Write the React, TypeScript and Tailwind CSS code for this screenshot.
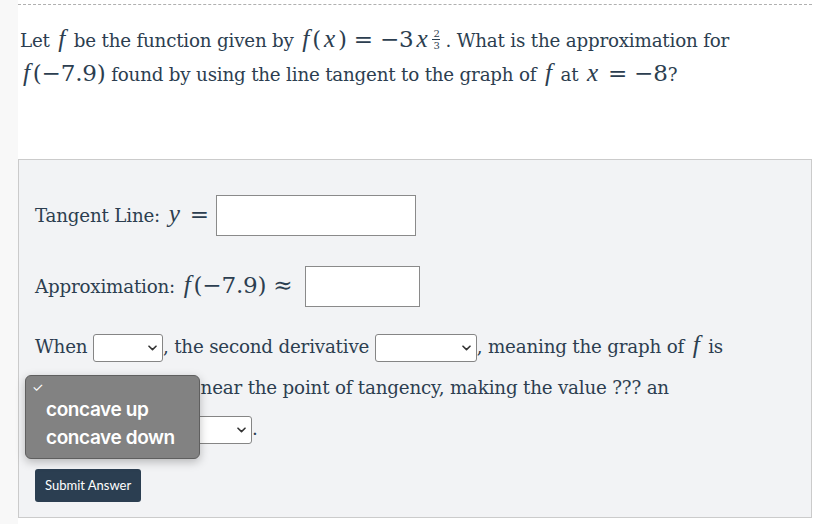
import React from 'react';

const serif = { fontFamily: '"DejaVu Serif", Georgia, serif' };
const mathFont = { fontFamily: '"DejaVu Serif", serif' };
const italicFont = { fontFamily: '"Liberation Serif", "Times New Roman", serif' };

// italic math letter
const V = ({ children }: { children: React.ReactNode }) => (
  <span className="italic text-[1.38em] leading-none pl-[3px] pr-[3px]" style={italicFont}>{children}</span>
);
// upright math run
const U = ({ children }: { children: React.ReactNode }) => (
  <span className="text-[1.26em] leading-none" style={mathFont}>{children}</span>
);
// relation / operator with spacing
const Op = ({ children }: { children: React.ReactNode }) => (
  <span className="text-[1.26em] leading-none mx-[7px]" style={mathFont}>{children}</span>
);

const Chevron = () => (
  <svg width="9" height="6" viewBox="0 0 9 6" className="absolute right-[5px] top-1/2 -translate-y-1/2">
    <path d="M1 1.2 L4.5 4.6 L8 1.2" fill="none" stroke="#333" strokeWidth="1.6" strokeLinecap="round" strokeLinejoin="round" />
  </svg>
);

const Select = ({ w }: { w: string }) => (
  <span className={`relative inline-block align-middle h-[28px] bg-white border border-[#858585] rounded-[3px] ${w}`}>
    <Chevron />
  </span>
);

export default function App() {
  return (
    <div className="w-[816px] h-[524px] bg-white flex overflow-hidden text-[#2c3e50]" style={serif}>
      <div className="w-[18px] bg-[#f8f8f8] shrink-0" />
      <div className="w-[794px] shrink-0 flex flex-col">
        <div className="mt-[4px] border-t border-dashed border-[#b0b0b0]" />
        <div className="pl-[2px] pt-[19px] text-[18.3px] leading-[34px] tracking-[-0.2px]">
          Let <V>f</V> be the function given by <V>f</V><U>(</U><V>x</V><U>)</U>
          <Op>=</Op>
          <U>−3</U><V>x</V>
          <span className="inline-flex flex-col items-center align-[10px] text-[10px] leading-[11px] ml-[2px] mr-[5px]" style={mathFont}>
            <span>2</span>
            <span className="border-t border-[#2c3e50] w-[8px]" />
            <span>3</span>
          </span>
          . What is the approximation for
          <br />
          <V>f</V><U>(−7.9)</U> found by using the line tangent to the graph of <V>f</V> at <V>x</V>
          <Op>=</Op>
          <U>−8</U>?
        </div>

        <div className="relative mt-[67px] h-[359px] bg-[#f2f3f5] border border-[#cbcbcb] px-[16px] pt-[35px] text-[18.3px] tracking-[-0.2px]">
          <div className="flex items-center h-[41px]">
            <span>
              Tangent Line: <V>y</V>
              <Op>=</Op>
            </span>
            <span className="w-[200px] h-[41px] bg-white border border-[#8a8a8a]" />
          </div>
          <div className="flex items-center h-[41px] mt-[30px]">
            <span>
              Approximation: <V>f</V><U>(−7.9)</U>
              <Op>≈</Op>
            </span>
            <span className="ml-[6px] w-[115px] h-[41px] bg-white border border-[#8a8a8a]" />
          </div>
          <div className="mt-[19px] leading-[41px]">
            When <Select w="w-[70px]" />, the second derivative <Select w="w-[102px]" />, meaning the graph of <V>f</V> is
            <br />
            <Select w="w-[160px]" /> near the point of tangency, making the value ??? an
            <br />
            <Select w="w-[217px]" />.
          </div>
          <button
            className="mt-[20px] h-[33px] px-[10px] bg-[#2b3e51] text-white text-[13px] rounded-[3px] tracking-normal"
            style={{ fontFamily: 'Lato, sans-serif' }}
          >
            Submit Answer
          </button>

          <div
            className="absolute left-[6px] top-[215px] w-[175px] h-[84px] bg-[#828282] border border-[#5f5f5f] rounded-[6px] shadow-[0_3px_10px_rgba(0,0,0,0.25)] text-white tracking-normal"
            style={{ fontFamily: 'Inter, "Liberation Sans", sans-serif' }}
          >
            <div className="absolute left-[6px] top-[2px] text-[13px]">✓</div>
            <div className="absolute left-[20px] top-[20px] text-[19px] leading-[28px] font-semibold tracking-[-0.4px]">
              <div>concave up</div>
              <div>concave down</div>
            </div>
          </div>
        </div>
      </div>
    </div>
  );
}
